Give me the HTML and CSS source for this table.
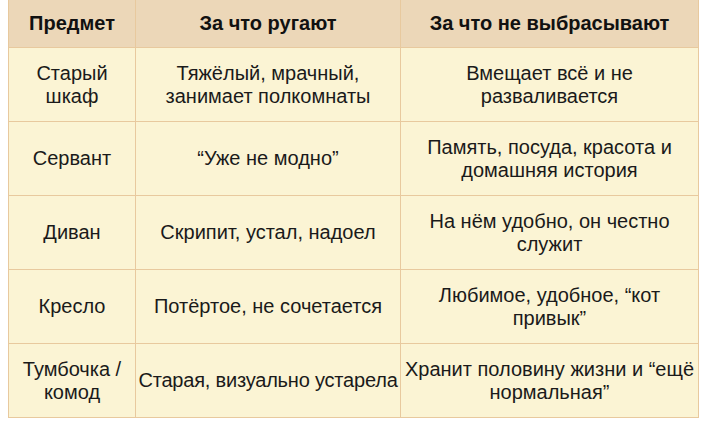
FILE: index.html
```html
<!DOCTYPE html>
<html lang="ru">
<head>
<meta charset="utf-8">
<link rel="stylesheet" href="styles.css">
</head>
<body>
<table class="furniture">
  <colgroup>
    <col class="c1">
    <col class="c2">
    <col class="c3">
  </colgroup>
  <thead>
    <tr>
      <th>Предмет</th>
      <th>За что ругают</th>
      <th>За что не выбрасывают</th>
    </tr>
  </thead>
  <tbody>
    <tr>
      <td>Старый шкаф</td>
      <td>Тяжёлый, мрачный, занимает полкомнаты</td>
      <td>Вмещает всё и не разваливается</td>
    </tr>
    <tr>
      <td>Сервант</td>
      <td>“Уже не модно”</td>
      <td>Память, посуда, красота и домашняя история</td>
    </tr>
    <tr>
      <td>Диван</td>
      <td>Скрипит, устал, надоел</td>
      <td>На нём удобно, он честно служит</td>
    </tr>
    <tr>
      <td>Кресло</td>
      <td>Потёртое, не сочетается</td>
      <td>Любимое, удобное, “кот привык”</td>
    </tr>
    <tr>
      <td>Тумбочка / комод</td>
      <td class="tight">Старая, визуально устарела</td>
      <td>Хранит половину жизни и “ещё нормальная”</td>
    </tr>
  </tbody>
</table>
</body>
</html>
```
FILE: styles.css
```css
html, body {
  margin: 0;
  padding: 0;
  background: #ffffff;
}
body {
  padding: 0 8px;
  font-family: "Liberation Sans", Arial, sans-serif;
  color: #1a1a1a;
}
.furniture {
  width: 690px;
  border-collapse: collapse;
  table-layout: fixed;
  font-size: 20px;
  line-height: normal;
}
.c1 { width: 127px; }
.c2 { width: 265px; }
.c3 { width: 298px; }
.furniture th,
.furniture td {
  border: 1px solid #e8c99e;
  text-align: center;
  vertical-align: middle;
}
.furniture th {
  border-top: 0;
  background: #ecd7b8;
  font-weight: bold;
  color: #111;
  padding: 12px 0;
}
.furniture td {
  background: #fbf4d4;
  padding: 13.5px 0;
}
.furniture td.tight {
  white-space: nowrap;
  letter-spacing: -0.2px;
}
```
